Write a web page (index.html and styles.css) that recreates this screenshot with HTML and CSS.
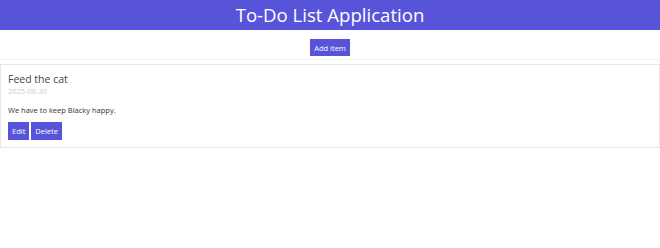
FILE: index.html
```html
<!DOCTYPE html>
<html lang="en">
<head>
    <meta charset="UTF-8">
    <meta name="viewport" content="width=device-width, initial-scale=1.0">
    <title>To-Do List Application</title>
    <link rel="stylesheet" href="styles.css">
</head>
<body>
    <header class="app-header">
        <h1>To-Do List Application</h1>
    </header>

    <div class="toolbar">
        <button class="btn">Add item</button>
    </div>

    <div class="todo-list">
        <div class="todo-item">
            <h2 class="todo-title">Feed the cat</h2>
            <div class="todo-date">2025-08-30</div>
            <p class="todo-desc">We have to keep Blacky happy.</p>
            <div class="todo-actions">
                <button class="btn">Edit</button>
                <button class="btn">Delete</button>
            </div>
        </div>
    </div>
</body>
</html>
```

FILE: styles.css
```css
body {
    margin: 0;
    font-family: 'Open Sans', 'Noto Sans', sans-serif;
    color: #333;
    background-color: white;
}
.app-header {
    background-color: #5754d9;
    height: 30px;
    display: flex;
    align-items: center;
    justify-content: center;
}
.app-header h1 {
    margin: 0;
    color: white;
    font-size: 18.6px;
    font-weight: normal;
    line-height: 30px;
}
.toolbar {
    display: flex;
    justify-content: center;
    padding: 9px 0 3px;
    border-bottom: 1px solid #f0f0f0;
}
.btn {
    background-color: #5754d9;
    color: white;
    border: none;
    font-family: inherit;
    font-size: 7.5px;
    padding: 0 4px;
    height: 17px;
    cursor: pointer;
}
.todo-actions .btn {
    height: 18px;
}
.todo-list {
    margin-top: 4px;
}
.todo-item {
    border: 1px solid #e6e6e6;
    padding: 7px 7px 7px;
}
.todo-title {
    margin: 0;
    font-size: 10.5px;
    font-weight: normal;
    color: #444;
    line-height: 14px;
}
.todo-date {
    font-size: 7.5px;
    color: #ccc;
    line-height: 11px;
}
.todo-desc {
    margin: 8px 0 6px;
    font-size: 7.5px;
    line-height: 11px;
}
.todo-actions {
    display: flex;
    gap: 2px;
}
```
